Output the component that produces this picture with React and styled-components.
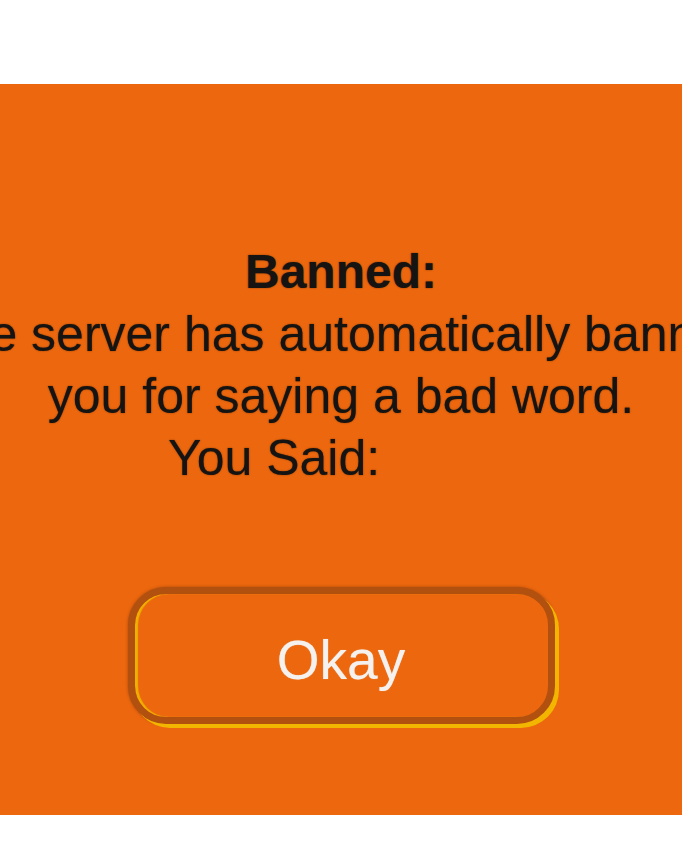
import { createGlobalStyle, styled } from "styled-components"

const GlobalStyle = createGlobalStyle`
    html,
    body {
        margin: 0;
        padding: 0;
        background: #ffffff;
    }

    body {
        font-family: "Liberation Sans", Arial, sans-serif;
    }
`

const Page = styled.div`
    width: 100%;
    height: 852px;
    padding-top: 84px;
    box-sizing: border-box;
    overflow: hidden;
`

const Panel = styled.div`
    height: 731px;
    background: #ec670e;
    padding-top: 157px;
    box-sizing: border-box;
    display: flex;
    flex-direction: column;
    align-items: center;
    overflow: hidden;
`

const Message = styled.div`
    display: flex;
    flex-direction: column;
    align-items: center;
    color: #161412;
    font-size: 50px;
    line-height: 62px;
    white-space: nowrap;
    text-shadow: 0 0 1.5px rgba(20, 14, 8, 0.6);
`

const Line = styled.div`
    font-weight: ${(p) => (p.bold ? 700 : 400)};
    font-size: ${(p) => (p.bold ? "48px" : "inherit")};
`

const Said = styled.span`
    display: inline-block;
    width: ${(p) => p.width}px;
`

const OkayButton = styled.button`
    margin-top: 98px;
    width: 427px;
    height: 137px;
    box-sizing: border-box;
    border: 7px solid #b2500f;
    border-radius: 38px;
    background: #ec670e;
    color: #f4f1ee;
    font-family: "Liberation Sans", Arial, sans-serif;
    font-size: 55px;
    padding: 8px 0 0 0;
    text-shadow: 0 0 1px rgba(255, 255, 255, 0.5);
    box-shadow:
        4px 4px 0 0 #f2b500,
        inset 3px 0 1px 0 #f0b000,
        0 0 3px 0 rgba(120, 50, 10, 0.6);
    cursor: pointer;
`

export default function App() {
    return (
        <>
            <GlobalStyle />
            <Page>
                <Panel>
                    <Message>
                        <Line bold>Banned:</Line>
                        <Line>The server has automatically banned</Line>
                        <Line>you for saying a bad word.</Line>
                        <Line>
                            You Said: <Said width={120} />
                        </Line>
                    </Message>
                    <OkayButton>Okay</OkayButton>
                </Panel>
            </Page>
        </>
    )
}
